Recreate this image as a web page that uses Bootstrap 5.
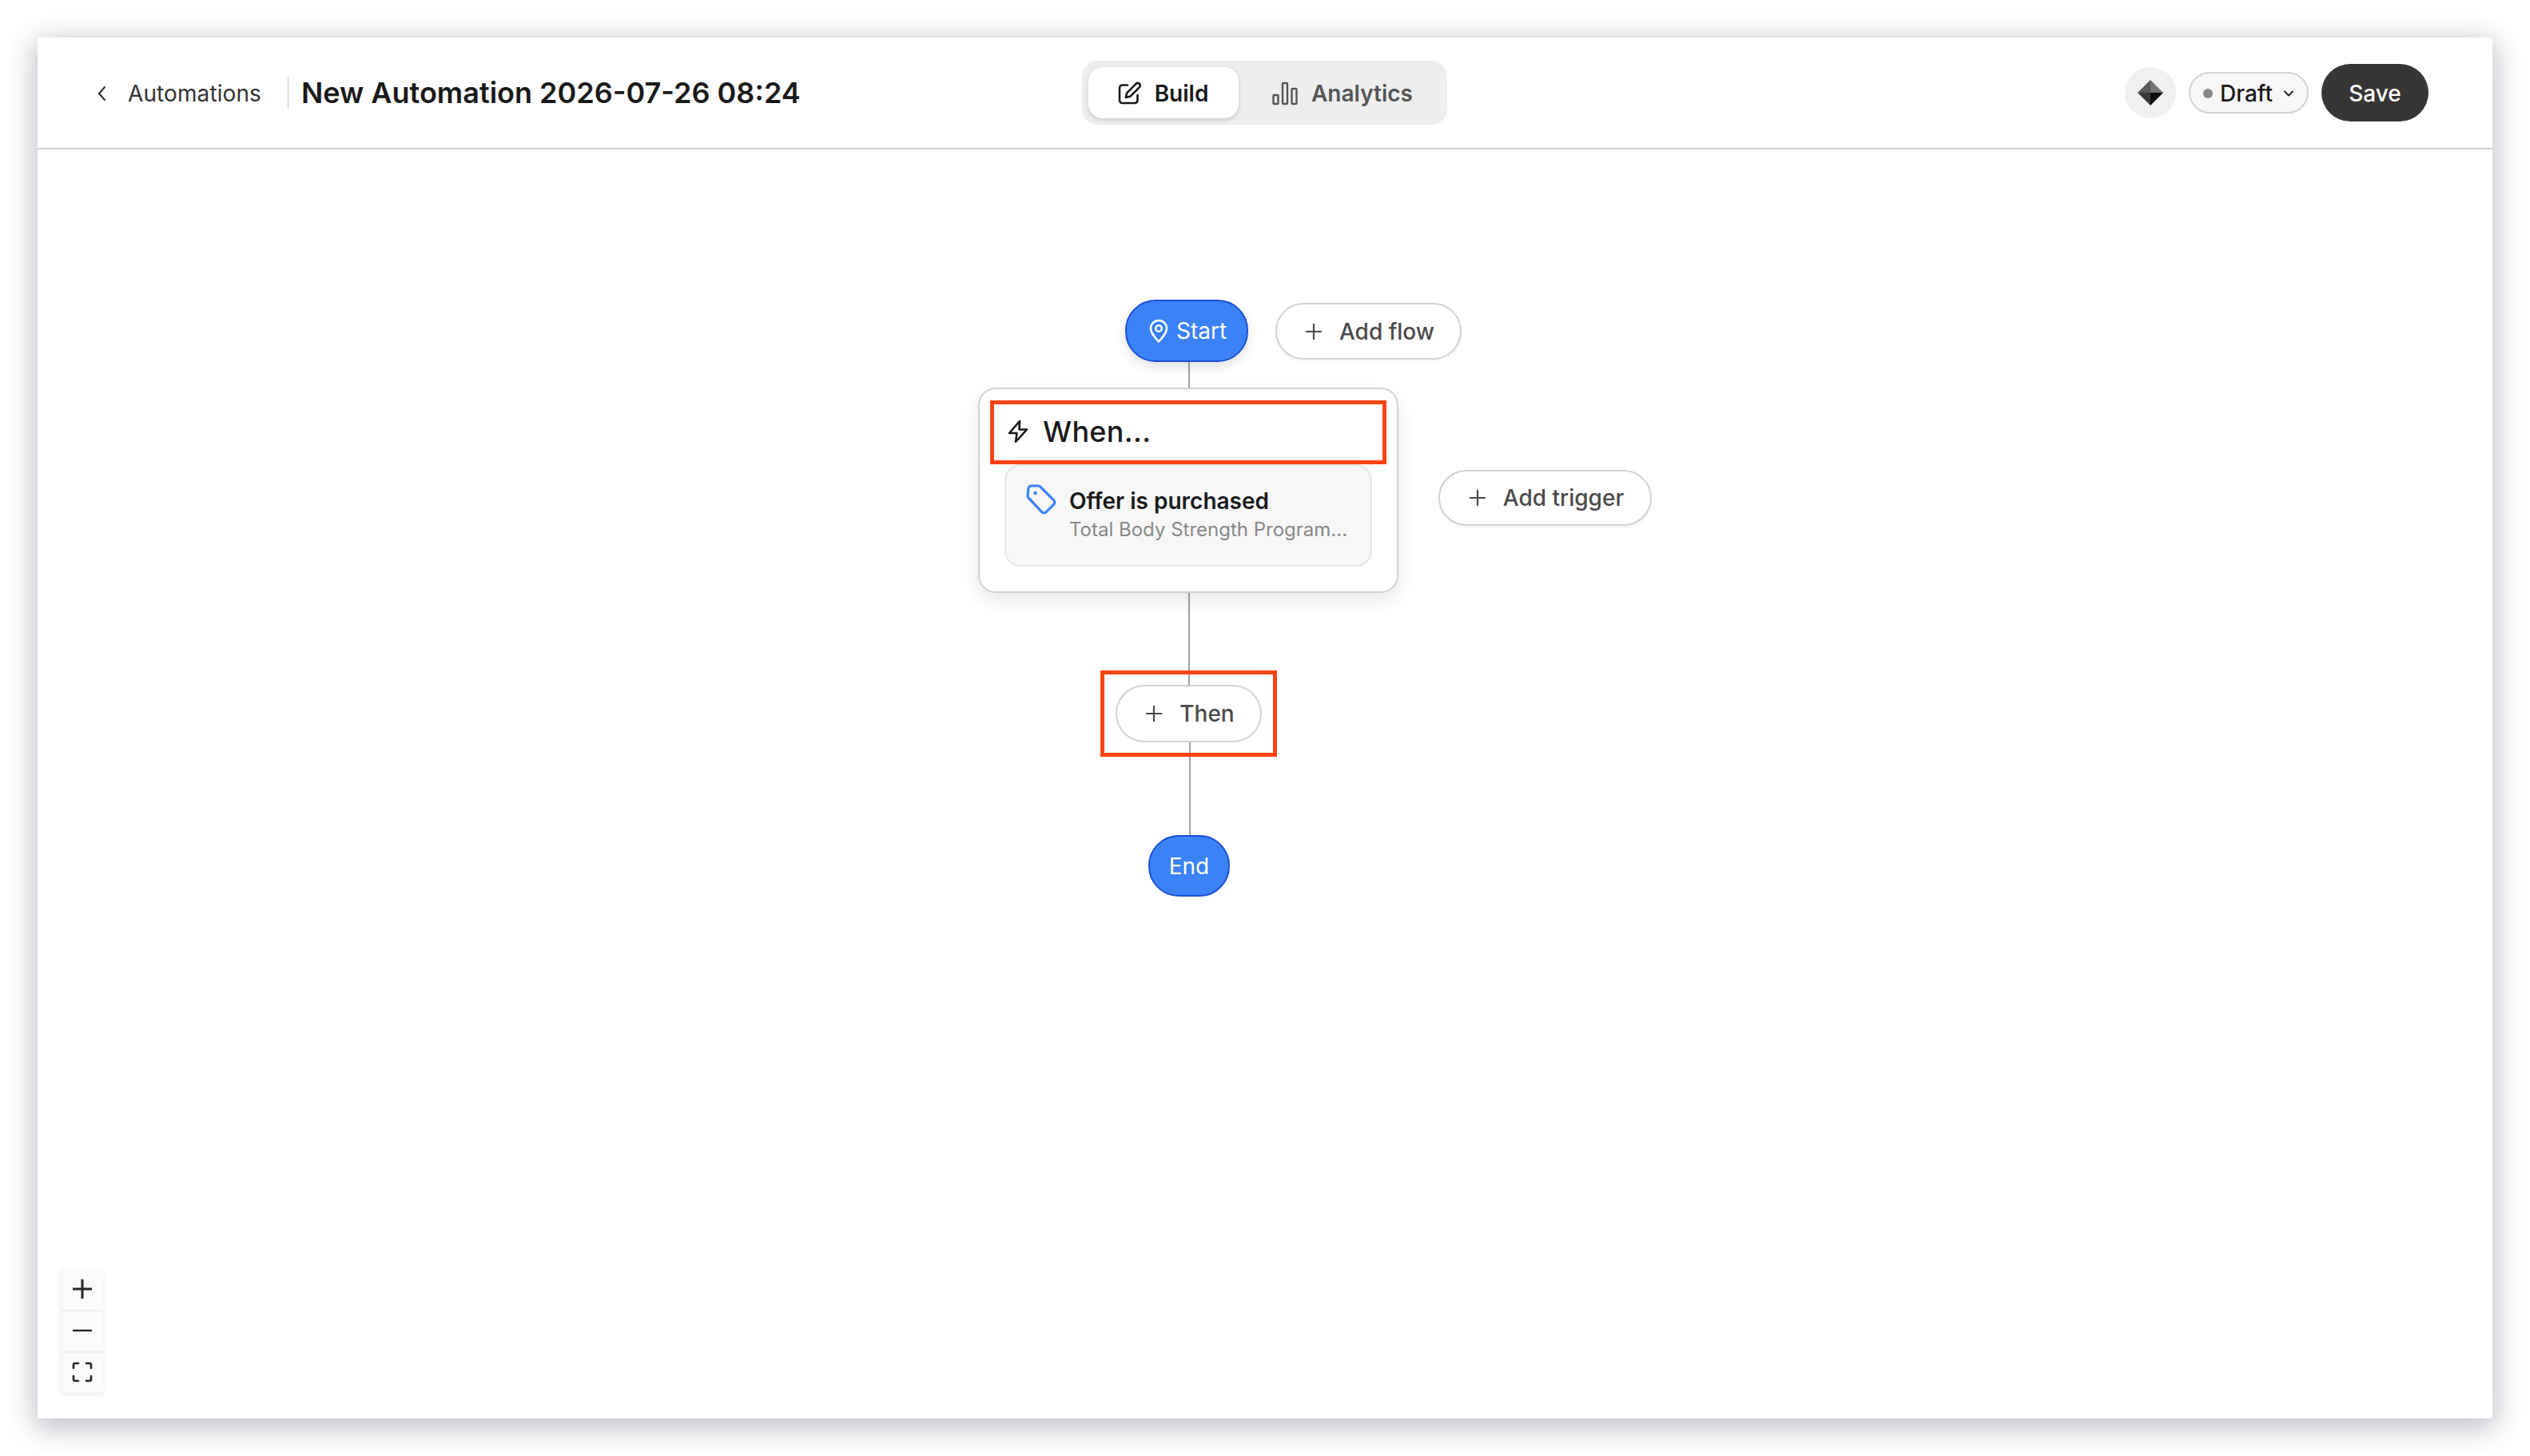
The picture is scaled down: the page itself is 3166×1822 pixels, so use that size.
<!doctype html>
<html lang="en">
<head>
<meta charset="utf-8">
<title>New Automation</title>
<link href="https://cdn.jsdelivr.net/npm/bootstrap@5.3.0/dist/css/bootstrap.min.css" rel="stylesheet">
<style>
html,body{height:100%;background:#fff}
body{font-family:"Inter","Liberation Sans",sans-serif;color:#1a1a1a;padding:47px;overflow:hidden}
.app-window{width:3072px;height:1728px;background:#fff;border-radius:4px 4px 2px 2px;box-shadow:0 8px 36px 4px rgba(40,44,70,.3)}
.app-header{height:140px;border-bottom:2px solid #d2d2d2;flex:none}
.head-left{width:1307px;padding-left:74px;flex:none}
.back-link{font-size:28px;line-height:1;color:#333;text-decoration:none;gap:27px;letter-spacing:.1px;padding-top:2px}
.back-link svg{width:12px;height:20px}
.head-sep{width:1px;height:40px;background:#ccc;margin:0 16px 0 33px}
.head-title{font-size:36px;font-weight:600;margin:0;line-height:1;color:#1a1a1a;white-space:nowrap}
.view-tabs{width:457px;height:80px;background:#eee;border-radius:20px;padding:8px;gap:0;flex:none}
.view-tab{height:64px;border-radius:18px;font-size:28px;font-weight:600;padding:2px 0 0;border:0;color:#555;background:transparent}
.view-tab.is-build{width:188px;background:#fff;color:#1a1a1a;box-shadow:0 2px 5px rgba(0,0,0,.16);gap:17px;padding-right:2px}
.view-tab.is-analytics{width:249px;gap:17px;padding-left:11px}
.head-right{flex:1;padding-right:80px;gap:16px}
.plan-badge{width:64px;height:64px;background:#f0f0f0;border-radius:50%;flex:none}
.plan-badge svg{width:32px;height:32px}
.status-pill{height:52px;width:150px;background:#f7f7f7;border:2px solid #d2d2d2;border-radius:26px;font-size:28px;font-weight:500;color:#1a1a1a;padding:2px 0 0 16px;gap:9px;justify-content:flex-start}
.status-dot{width:12px;height:12px;border-radius:50%;background:#888;flex:none}
.status-pill svg{width:14px;height:10px;margin-left:4px}
.save-btn{height:72px;width:134px;background:#373634;border:0;border-radius:36px;color:#fff;font-size:28px;font-weight:500;padding:2px 0 0}
.canvas{position:relative;flex:1}
.wire{position:absolute;background:#a0a0a0;width:2px}
.wire-a{left:1440px;top:266px;height:34px}
.wire-b{left:1440px;top:555px;height:116px}
.wire-c{left:1441px;top:742px;height:116px}
.node{position:absolute}
.flow-pill{background:#3b82f6;border:2px solid #1d4fd8;color:#fff;font-size:28px;font-weight:400;border-radius:38px;padding:0;box-shadow:0 6px 14px rgba(0,0,0,.12)}
.start-node{left:1361px;top:188px;width:154px;height:78px;gap:9px;padding-left:2px}
.start-node svg{width:26px;height:30px}
.end-node{left:1390px;top:858px;width:102px;height:77px;box-shadow:none}
.add-pill{background:#fff;border:2px solid #d2d2d2;color:#4a4a4a;font-size:28px;font-weight:500;border-radius:36px;padding:0 0 0 3px;gap:21px;box-shadow:0 2px 4px rgba(0,0,0,.05)}
.add-pill svg{width:22px;height:22px;flex:none}
.add-flow{left:1549px;top:192px;width:233px;height:71px}
.add-trigger{left:1753px;top:401px;width:267px;height:70px}
.add-then{left:1349px;top:670px;width:183px;height:72px;box-shadow:none}
.when-card{left:1177px;top:298px;width:526px;height:257px;border:2px solid #d2d2d2;border-radius:22px;background:#fff;box-shadow:0 10px 24px rgba(0,0,0,.1)}
.when-head{height:80px;margin:14px 13px 0;padding:0 0 3px 21px;gap:17px;font-size:36px;font-weight:500;line-height:1;color:#1a1a1a;letter-spacing:.3px}
.when-head svg{width:28px;height:30px;flex:none}
.trigger-item{margin:0 31px;height:128px;background:#f7f7f7;border:2px solid #e6e6e6;border-radius:20px;padding:0 0 0 25px;gap:16px}
.trigger-item svg{width:38px;height:38px;margin-top:23px;flex:none}
.trigger-name{font-size:28px;font-weight:600;line-height:1;margin-top:30px;color:#1a1a1a}
.trigger-sub{font-size:24px;line-height:1;margin-top:10px;color:#888;white-space:nowrap}
.anno{position:absolute;border:5px solid #ff4314;pointer-events:none}
.anno-when{left:1192px;top:314px;width:496px;height:80px}
.anno-then{left:1330px;top:652px;width:221px;height:108px}
.zoom-controls{position:absolute;left:30px;top:1402px;width:52px;background:#eee;gap:2px;box-shadow:0 1px 6px rgba(0,0,0,.1)}
.zoom-btn{height:50px;background:#fafafa;border:0;border-radius:0;padding:0 0 2px}
.zoom-btn svg{width:26px;height:26px}
</style>
</head>
<body>
<div class="app-window d-flex flex-column">
  <header class="app-header d-flex align-items-center">
    <div class="head-left d-flex align-items-center">
      <a class="back-link d-flex align-items-center" href="#">
        <svg viewBox="0 0 12 20" fill="none" stroke="#333" stroke-width="2.2" stroke-linecap="round" stroke-linejoin="round"><path d="M10 2 3 10l7 8"/></svg>
        <span>Automations</span>
      </a>
      <span class="head-sep"></span>
      <h1 class="head-title">New Automation 2026-07-26 08:24</h1>
    </div>
    <div class="view-tabs d-flex">
      <button class="btn view-tab is-build d-flex align-items-center justify-content-center" type="button">
        <svg width="30" height="30" viewBox="0 0 30 30" fill="none" stroke="#1a1a1a" stroke-width="2.6" stroke-linecap="round" stroke-linejoin="round"><path d="M13 4.500H6.500A3.500 3.500 0 0 0 3 8v15.500A3.500 3.500 0 0 0 6.500 27H22a3.500 3.500 0 0 0 3.500-3.500V17"/><path d="M23.500 2.800a3.100 3.100 0 0 1 4.400 4.400L16.500 18.600l-5.700 1.400 1.400-5.700z"/></svg>
        <span>Build</span>
      </button>
      <button class="btn view-tab is-analytics d-flex align-items-center justify-content-center" type="button">
        <svg width="32" height="30" viewBox="0 0 32 30" fill="none" stroke="#555" stroke-width="2.400" stroke-linejoin="round"><rect x="1.500" y="17" width="6" height="11" rx="1"/><rect x="13" y="2" width="6" height="26" rx="1"/><rect x="24.500" y="9" width="6" height="19" rx="1"/></svg>
        <span>Analytics</span>
      </button>
    </div>
    <div class="head-right d-flex align-items-center justify-content-end">
      <span class="plan-badge d-flex align-items-center justify-content-center">
        <svg viewBox="0 0 32 32"><polygon points="16,0 0,16 16,16" fill="#5a5a5a"/><polygon points="16,0 32,16 16,16" fill="#747474"/><polygon points="0,16 16,32 16,16" fill="#3a3a3a"/><polygon points="32,16 16,32 16,16" fill="#0c0c0c"/></svg>
      </span>
      <button class="btn status-pill d-flex align-items-center" type="button">
        <span class="status-dot"></span><span>Draft</span>
        <svg viewBox="0 0 14 10" fill="none" stroke="#1a1a1a" stroke-width="1.800" stroke-linecap="round" stroke-linejoin="round"><path d="M2 2.500 7 7.500l5-5"/></svg>
      </button>
      <button class="btn save-btn" type="button">Save</button>
    </div>
  </header>
  <main class="canvas">
    <span class="wire wire-a"></span>
    <span class="wire wire-b"></span>
    <span class="wire wire-c"></span>
    <button class="btn node flow-pill start-node d-flex align-items-center justify-content-center" type="button">
      <svg viewBox="0 0 26 30" fill="none" stroke="#fff" stroke-width="2.400" stroke-linejoin="round"><path d="M13 28.500C8 23 3 17.500 3 12a10 10 0 0 1 20 0c0 5.500-5 11-10 16.500z"/><circle cx="13" cy="12" r="3.800"/></svg>
      <span>Start</span>
    </button>
    <button class="btn node add-pill add-flow d-flex align-items-center justify-content-center" type="button">
      <svg viewBox="0 0 24 24" fill="none" stroke="#4a4a4a" stroke-width="2.400" stroke-linecap="round"><path d="M12 2v20M2 12h20"/></svg>
      <span>Add flow</span>
    </button>
    <section class="node when-card">
      <div class="when-head d-flex align-items-center">
        <svg viewBox="0 0 28 30" fill="none" stroke="#1a1a1a" stroke-width="2.600" stroke-linejoin="round"><path d="M16 2 3 17h9.500l-1.500 11 14-15.500h-9.500z"/></svg>
        <span>When...</span>
      </div>
      <div class="trigger-item d-flex">
        <svg viewBox="0 0 38 38" fill="none" stroke="#3b82f6" stroke-width="3.200" stroke-linejoin="round"><path d="M3 5.500A3.500 3.500 0 0 1 6.500 2h8.600a4 4 0 0 1 2.800 1.200l16.700 16.600a4 4 0 0 1 0 5.600l-9.300 9.300a4 4 0 0 1-5.600 0L3.200 17.200A4 4 0 0 1 2 14.400z"/><circle cx="11.500" cy="11" r="1.500" fill="#3b82f6" stroke-width="1.500"/></svg>
        <div>
          <div class="trigger-name">Offer is purchased</div>
          <div class="trigger-sub">Total Body Strength Program...</div>
        </div>
      </div>
    </section>
    <button class="btn node add-pill add-trigger d-flex align-items-center justify-content-center" type="button">
      <svg viewBox="0 0 24 24" fill="none" stroke="#4a4a4a" stroke-width="2.400" stroke-linecap="round"><path d="M12 2v20M2 12h20"/></svg>
      <span>Add trigger</span>
    </button>
    <button class="btn node add-pill add-then d-flex align-items-center justify-content-center" type="button">
      <svg viewBox="0 0 24 24" fill="none" stroke="#4a4a4a" stroke-width="2.400" stroke-linecap="round"><path d="M12 2v20M2 12h20"/></svg>
      <span>Then</span>
    </button>
    <button class="btn node flow-pill end-node d-flex align-items-center justify-content-center" type="button">End</button>
    <span class="anno anno-when"></span>
    <span class="anno anno-then"></span>
    <div class="zoom-controls d-flex flex-column">
      <button class="btn zoom-btn d-flex align-items-center justify-content-center" type="button" aria-label="Zoom in"><svg viewBox="0 0 26 26" fill="none" stroke="#262626" stroke-width="3"><path d="M13 1v24M1 13h24"/></svg></button>
      <button class="btn zoom-btn d-flex align-items-center justify-content-center" type="button" aria-label="Zoom out"><svg viewBox="0 0 26 26" fill="none" stroke="#262626" stroke-width="2.400"><path d="M1 13h24"/></svg></button>
      <button class="btn zoom-btn d-flex align-items-center justify-content-center" type="button" aria-label="Fit"><svg viewBox="0 0 26 26" fill="none" stroke="#262626" stroke-width="2.600" stroke-linecap="round" stroke-linejoin="round"><path d="M8 2H4a2 2 0 0 0-2 2v4M18 2h4a2 2 0 0 1 2 2v4M8 24H4a2 2 0 0 1-2-2v-4M18 24h4a2 2 0 0 0 2-2v-4"/></svg></button>
    </div>
  </main>
</div>
<script src="https://cdn.jsdelivr.net/npm/bootstrap@5.3.0/dist/js/bootstrap.bundle.min.js"></script>
</body>
</html>
